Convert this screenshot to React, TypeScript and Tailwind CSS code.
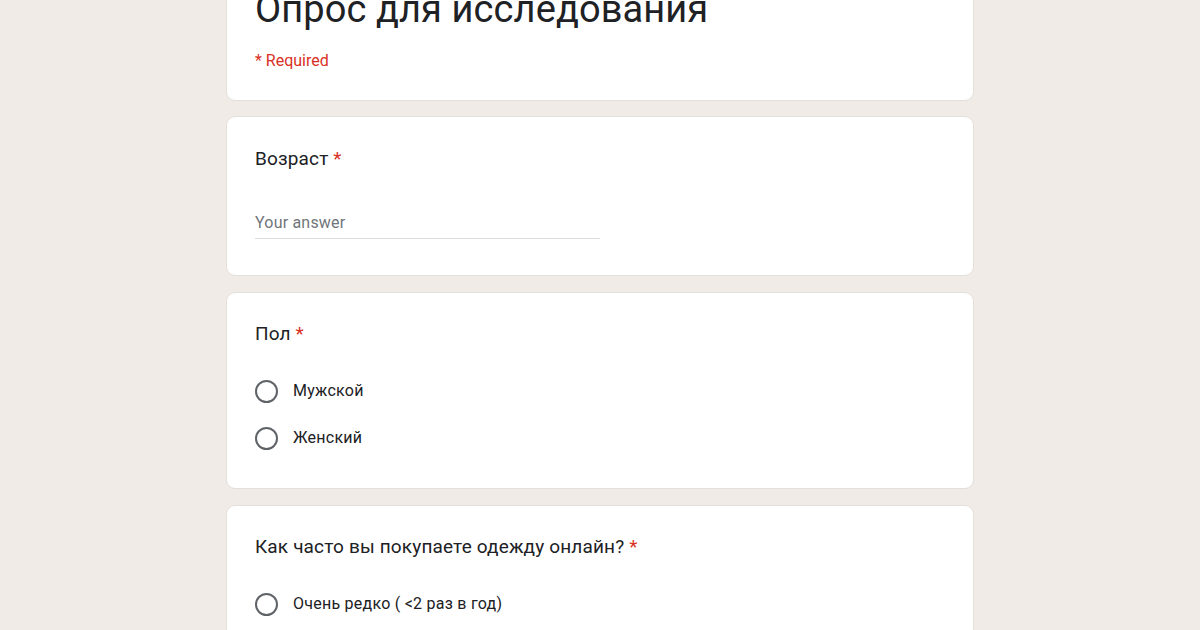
import React from "react";

const Radio = ({ label }: { label: string }) => (
  <div className="flex items-center h-[24px]">
    <div className="w-[23px] h-[23px] rounded-full border-2 border-[#5f6368] shrink-0" />
    <span className="ml-[15px] text-[16px] text-[#202124] tracking-[0.25px]" style={{ fontFamily: "Roboto, sans-serif" }}>{label}</span>
  </div>
);

const Title = ({ text }: { text: string }) => (
  <div className="text-[19px] leading-[24px] text-[#202124] tracking-[0.15px]" style={{ fontFamily: "Roboto, sans-serif" }}>
    {text} <span className="text-[#d93025]">*</span>
  </div>
);

export default function App() {
  return (
    <div className="w-[1200px] h-[630px] overflow-hidden bg-[#f0ebe6]" style={{ fontFamily: "Roboto, sans-serif" }}>
      <div className="w-[748px] mx-auto flex flex-col gap-[16px] mt-[-40px]">
        <div className="bg-white rounded-[9px] border border-[#e3dfdb] pl-[28px] pt-[24px] h-[141px] mb-[-1px]">
          <div className="text-[38px] leading-[48px] text-[#202124] tracking-[0.1px]">Опрос для исследования</div>
          <div className="mt-[16px] text-[16px] text-[#d93025]">* Required</div>
        </div>
        <div className="bg-white rounded-[9px] border border-[#e3dfdb] pl-[28px] pt-[30px] h-[160px]">
          <Title text="Возраст" />
          <div className="mt-[40px] w-[345px] border-b border-[#dadce0] pb-[3px] text-[16px] text-[#70757a] tracking-[0.2px]">Your answer</div>
        </div>
        <div className="bg-white rounded-[9px] border border-[#e3dfdb] pl-[28px] pt-[29px] h-[197px]">
          <Title text="Пол" />
          <div className="mt-[33px] flex flex-col gap-[23px]">
            <Radio label="Мужской" />
            <Radio label="Женский" />
          </div>
        </div>
        <div className="bg-white rounded-[9px] border border-[#e3dfdb] pl-[28px] pt-[29px] h-[200px]">
          <Title text="Как часто вы покупаете одежду онлайн?" />
          <div className="mt-[33px] flex flex-col gap-[23px]">
            <Radio label="Очень редко ( <2 раз в год)" />
          </div>
        </div>
      </div>
    </div>
  );
}
